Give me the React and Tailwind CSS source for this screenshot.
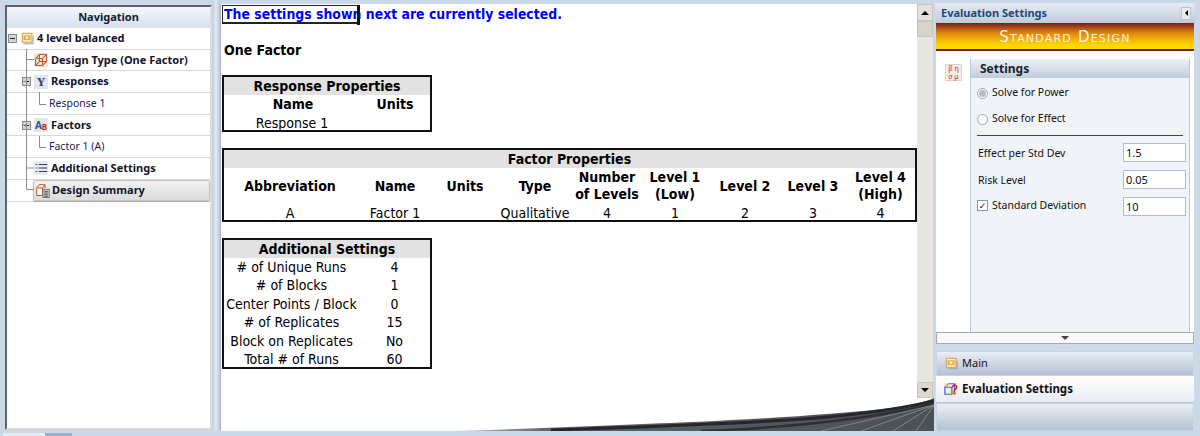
import React from "react";

const uiFont = { fontFamily: '"Noto Sans", "DejaVu Sans", sans-serif' };

const FolderIcon = ({ size = 13 }) => (
  <svg width={size} height={size} viewBox="0 0 16 16" className="shrink-0">
    <rect x="1.5" y="1.5" width="12" height="11" fill="#fff3d0" stroke="#c98a2a" />
    <rect x="3" y="4" width="9" height="6" fill="#f0b040" />
    <path d="M6 5 L10 7 L6 9 Z" fill="#fff" />
    <path d="M3 14.5 H15 V5" fill="none" stroke="#a0a0a0" strokeWidth="1.2" />
  </svg>
);

const DesignIcon = () => (
  <svg width="14" height="14" viewBox="0 0 18 18" className="shrink-0">
    <rect x="0" y="0" width="18" height="18" fill="#ece8e2" />
    <path d="M2 7 H11 V16 H2 Z M7 2 H16 V11 H7 Z M2 7 L7 2 M11 7 L16 2 M11 16 L16 11 M2 16 L7 11" fill="none" stroke="#c8512a" strokeWidth="1.3" />
    <rect x="1" y="6" width="2.5" height="2.5" fill="#e8a030" />
    <rect x="10" y="15" width="2.5" height="2.5" fill="#e8a030" />
  </svg>
);

const LetterBox = ({ children }) => (
  <div className="w-[14px] h-[14px] shrink-0 bg-[#e4e6ea] flex items-center justify-center overflow-hidden">
    {children}
  </div>
);

const ListIcon = () => (
  <svg width="14" height="14" viewBox="0 0 18 18" className="shrink-0">
    <rect x="0" y="0" width="18" height="18" fill="#e6e8ec" />
    <path d="M6 4.5 H17 M6 9 H17 M6 13.5 H17" stroke="#2f3f5f" strokeWidth="1.5" />
    <path d="M2 4.5 H4.5 M2 9 H4.5 M2 13.5 H4.5" stroke="#5a6a8a" strokeWidth="1.5" />
  </svg>
);

const SummaryIcon = () => (
  <svg width="15" height="15" viewBox="0 0 18 18" className="shrink-0">
    <path d="M2 6 H9 V15 H2 Z M5 2 H12 V6 M2 6 L5 2 M9 6 L12 2" fill="#fff" stroke="#c8512a" strokeWidth="1.2" />
    <rect x="9.5" y="7.5" width="7.5" height="10" fill="#cfd2d6" stroke="#666" />
    <path d="M11 10 H15.5 M11 12 H15.5 M11 14 H15.5 M11 16 H15.5" stroke="#444" />
    <rect x="1" y="5" width="2.5" height="2.5" fill="#e8a030" />
  </svg>
);

const EvalIcon = () => (
  <svg width="14" height="14" viewBox="0 0 16 16" className="shrink-0">
    <rect x="0" y="1" width="15" height="14" fill="#eee" />
    <path d="M1 6 H9 V14 H1 Z M5 2 H12 V10" fill="none" stroke="#4f5fd8" strokeWidth="1.4" />
    <path d="M1 6 L5 2 M9 14 L12 10" stroke="#e09020" strokeWidth="1.6" />
    <path d="M9.5 6 Q11 2 14 4.5 Q15.5 7 12 9 V11" fill="none" stroke="#d02020" strokeWidth="1.7" />
    <rect x="11" y="12" width="2.2" height="2.2" fill="#d02020" />
  </svg>
);

const Expander = () => (
  <div className="w-[9px] h-[9px] bg-[#d4d4d4] border border-[#8a8a8a] flex items-center justify-center shrink-0">
    <div className="w-[5px] h-px bg-[#222]" />
  </div>
);

const TreeRow = ({ left, children }) => (
  <div className="h-[21.7px] border-b border-[#d8dad8] flex items-center" style={{ paddingLeft: left }}>
    {children}
  </div>
);

const boldItem = "text-[11px] font-bold text-[#14142a] whitespace-nowrap";

const Navigation = () => (
  <div className="w-[207px] ml-[5px] mt-[5px] h-[425px] bg-white border-l-2 border-t-2 border-[#5f6368] border-r-2 border-r-[#dcdcdc] border-b-2 border-b-[#dcd8d0] relative shrink-0">
    <div className="h-[21px] bg-gradient-to-b from-[#f4f7fb] to-[#d6dfec] text-center text-[11px] font-bold text-[#10202f] leading-[20px]">
      Navigation
    </div>
    {/* tree lines */}
    <svg className="absolute left-0 top-0" width="60" height="200">
      <path
        d="M19.5 42 V182.5 H27 M19.5 52.5 H27 M19.5 74.5 H15 M19.5 118 H15 M19.5 161 H27 M32.5 85 V97.5 H39 M32.5 129 V140.5 H39"
        fill="none"
        stroke="#8c8c8c"
      />
    </svg>
    <TreeRow left={1}>
      <Expander />
      <div className="ml-[4px]"><FolderIcon /></div>
      <span className={`ml-[3px] ${boldItem}`}>4 level balanced</span>
    </TreeRow>
    <TreeRow left={27}>
      <DesignIcon />
      <span className={`ml-[3px] ${boldItem}`}>Design Type (One Factor)</span>
    </TreeRow>
    <TreeRow left={15}>
      <Expander />
      <div className="ml-[3px] relative">
        <LetterBox>
          <span className="font-bold text-[12px] leading-none text-[#26407a]" style={{ fontFamily: '"Liberation Serif", serif' }}>Y</span>
        </LetterBox>
      </div>
      <span className={`ml-[3px] ${boldItem}`}>Responses</span>
    </TreeRow>
    <TreeRow left={42}>
      <span className="text-[10.5px] text-[#1b1b4e]">Response 1</span>
    </TreeRow>
    <TreeRow left={15}>
      <Expander />
      <div className="ml-[3px]">
        <LetterBox>
          <span className="font-bold text-[10px] text-[#2a50a0] leading-none">A</span>
          <span className="font-bold text-[8px] text-[#c02020] leading-none mt-[3px]">B</span>
        </LetterBox>
      </div>
      <span className={`ml-[3px] ${boldItem}`}>Factors</span>
    </TreeRow>
    <TreeRow left={42}>
      <span className="text-[10.5px] text-[#1b1b4e]">Factor 1 (A)</span>
    </TreeRow>
    <TreeRow left={27}>
      <ListIcon />
      <span className={`ml-[3px] ${boldItem}`}>Additional Settings</span>
    </TreeRow>
    <TreeRow left={0}>
      <div className="ml-[26px] h-[21px] w-[178px] flex items-center pl-[1px] bg-gradient-to-b from-[#f2f2f2] to-[#dcdcdc] border border-[#c4c4c4] rounded-[2px] shadow-[0_1px_1px_#aaa]">
        <SummaryIcon />
        <span className={`ml-[2px] ${boldItem}`}>Design Summary</span>
      </div>
    </TreeRow>
  </div>
);

const tableTitle = "bg-[#e2e2e2] text-center font-bold leading-[18px]";

const ResponseTable = () => (
  <div className="w-[210px] h-[57px] border-2 border-[#111] mt-[15px] overflow-hidden">
    <div className={tableTitle}>Response Properties</div>
    <div className="grid grid-cols-[136px_70px] font-bold text-center leading-[19px]">
      <div className="pl-[2px]">Name</div>
      <div>Units</div>
      <div className="font-normal">Response 1</div>
      <div />
    </div>
  </div>
);

const factorCols = "grid grid-cols-[132px_78px_62px_78px_66px_70px_70px_66px_69px] text-center whitespace-nowrap";

const FactorTable = () => (
  <div className="w-[695px] h-[74px] border-2 border-[#111] mt-[16px] overflow-hidden">
    <div className={tableTitle}>Factor Properties</div>
    <div className={`${factorCols} font-bold h-[36px] items-center leading-[17px]`}>
      <div>Abbreviation</div>
      <div>Name</div>
      <div>Units</div>
      <div>Type</div>
      <div>Number<br />of Levels</div>
      <div>Level 1<br />(Low)</div>
      <div>Level 2</div>
      <div>Level 3</div>
      <div>Level 4<br />(High)</div>
    </div>
    <div className={`${factorCols} leading-[19px]`}>
      <div>A</div>
      <div>Factor 1</div>
      <div />
      <div>Qualitative</div>
      <div>4</div>
      <div>1</div>
      <div>2</div>
      <div>3</div>
      <div>4</div>
    </div>
  </div>
);

const settingsRows = [
  ["# of Unique Runs", "4"],
  ["# of Blocks", "1"],
  ["Center Points / Block", "0"],
  ["# of Replicates", "15"],
  ["Block on Replicates", "No"],
  ["Total # of Runs", "60"],
];

const SettingsTable = () => (
  <div className="w-[210px] h-[131px] border-2 border-[#111] mt-[16px] overflow-hidden">
    <div className={tableTitle}>Additional Settings</div>
    <div className="grid grid-cols-[135px_71px] text-center leading-[18.4px]">
      {settingsRows.map(([label, value]) => (
        <React.Fragment key={label}>
          <div className="whitespace-nowrap">{label}</div>
          <div>{value}</div>
        </React.Fragment>
      ))}
    </div>
  </div>
);

const Report = () => (
  <div className="flex-1 bg-white overflow-hidden">
    <div className="pl-px text-[14px] text-black" style={{ fontFamily: '"DejaVu Sans", sans-serif', fontStretch: "condensed" }}>
      <div className="text-[#0000ff] font-bold h-[26px] leading-[20px] pl-[2px] whitespace-nowrap relative">
        <span className="text-[13.9px]">The settings shown next are currently selected.</span>
        {/* focus box over the heading */}
        <div className="absolute left-0 top-[1px] w-[136px] h-[19px] border border-[#222] border-b-2" />
        <div className="absolute left-[135px] top-[1px] w-[3px] h-[20px] bg-[#111]" />
      </div>
      <div className="font-bold mt-[10px] leading-[20px] pl-[2px]">One Factor</div>
      <ResponseTable />
      <FactorTable />
      <SettingsTable />
    </div>
  </div>
);

const Swoosh = () => (
  <svg className="absolute left-0 bottom-0" width="713" height="36" viewBox="0 0 713 36">
    <defs>
      <linearGradient id="sw" x1="0" x2="1" y1="0" y2="0">
        <stop offset="0" stopColor="#b8bcc0" />
        <stop offset="0.2" stopColor="#5a6066" />
        <stop offset="1" stopColor="#4a5056" />
      </linearGradient>
    </defs>
    <path d="M237 36 C330 33 420 29 479 26.7 C540 24 620 19 679 12 C692 10 704 7 713 3 V36 Z" fill="url(#sw)" />
    <path d="M330 35 C420 32 500 29 560 25.5 C620 22 670 16 713 6" fill="none" stroke="#24282c" strokeWidth="3" />
    <path d="M480 36 C560 33 640 26 713 9" fill="none" stroke="#2c3034" strokeWidth="2.5" />
    <path d="M600 36 L713 10 M640 36 L713 10 M672 36 L713 10 M695 36 L713 10" fill="none" stroke="#8a9096" strokeWidth="0.8" />
  </svg>
);

const Scrollbar = () => (
  <div className="w-[16px] shrink-0 bg-[#e8e6e1] flex flex-col relative z-10 h-[394px]">
    <div className="h-[17px] bg-[#e4e1da] border border-[#c8c5be] flex items-center justify-center">
      <div className="w-0 h-0 border-x-[4px] border-x-transparent border-b-[4px] border-b-black" />
    </div>
    <div className="h-[16px] bg-[#d8d4cc] border border-[#c8c5be]" />
    <div className="flex-1" />
    <div className="h-[16px] bg-[#dcd8d0] border border-[#c8c5be] flex items-center justify-center">
      <div className="w-0 h-0 border-x-[4px] border-x-transparent border-t-[4px] border-t-black" />
    </div>
  </div>
);

const Field = ({ value }) => (
  <div className="w-[63px] h-[19px] bg-white border border-[#b4bcc8] pl-[2px] text-[11px] leading-[17px] text-[#111]">
    {value}
  </div>
);

const RadioDot = ({ on }) => (
  <div className="w-[11px] h-[11px] rounded-full border border-[#9aa4b4] bg-white flex items-center justify-center shrink-0">
    {on && <div className="w-[7px] h-[7px] rounded-full bg-[#b4bcc8]" />}
  </div>
);

const SidePanel = () => (
  <div className="w-[260px] ml-[2px] h-[428px] mt-[3px] bg-[#d0dbea] flex flex-col shrink-0 text-[#111]" style={uiFont}>
    <div className="h-[20px] shrink-0 bg-gradient-to-b from-[#e6ebf3] to-[#bfcbdc] flex items-center justify-between pl-[6px] pr-[3px]">
      <span className="text-[11px] font-bold text-[#24487c]">Evaluation Settings</span>
      <div className="w-[10px] h-[13px] mr-[1px] bg-[#e8ebf0] border border-[#b8c2d0] flex items-center justify-center">
        <div className="w-0 h-0 border-y-[3px] border-y-transparent border-r-[3px] border-r-black" />
      </div>
    </div>
    <div className="h-[28px] shrink-0 mx-[1px] bg-gradient-to-b from-[#7a1a14] via-[#e08a0c] via-40% to-[#ffd800] to-85% border-b-2 border-[#7a1a14] flex items-center justify-center pt-[3px]">
      <span className="text-[15px] text-[#f6f1e2] tracking-[1.2px] whitespace-nowrap" style={{ fontVariant: "small-caps", fontFamily: '"DejaVu Sans", sans-serif' }}>
        Standard Design
      </span>
    </div>
    <div className="h-[281px] shrink-0 mx-[1px] bg-white flex">
      <div className="w-[34px] shrink-0 pt-[13px] pl-[9px]">
        <div className="w-[17px] h-[17px] bg-[#f6ecec] border border-[#e0d0d0] text-[7px] leading-[7.5px] text-[#e01818] text-center whitespace-nowrap">
          β η<br />σ μ
        </div>
      </div>
      <div className="w-[220px] mt-[8px] bg-[#f0f3f8] border-x border-[#bcc8d8]">
        <div className="h-[19px] bg-gradient-to-b from-[#eef2f7] to-[#c0ccdc] rounded-t-[3px] pl-[9px] text-[12px] font-bold text-[#1a2430] leading-[19px]">
          Settings
        </div>
        <div className="pl-[6px] pr-[3px] text-[10.5px]">
          <div className="flex items-center gap-[4px] h-[14px] mt-[8px]"><RadioDot on /> <span>Solve for Power</span></div>
          <div className="flex items-center gap-[4px] h-[14px] mt-[12px]"><RadioDot /> <span>Solve for Effect</span></div>
          <div className="h-px bg-[#444] mt-[9px] mr-[3px]" />
          <div className="flex items-center justify-between mt-[7px]"><span className="pl-[1px] pt-[2px]">Effect per Std Dev</span><Field value="1.5" /></div>
          <div className="flex items-center justify-between mt-[8px]"><span className="pl-[1px] pt-[2px]">Risk Level</span><Field value="0.05" /></div>
          <div className="flex items-start justify-between mt-[8px]">
            <div className="flex items-center gap-[4px] pt-[1px]">
              <div className="w-[11px] h-[11px] bg-white border border-[#8a94a4] flex items-center justify-center text-[9px] leading-none">✓</div>
              <span>Standard Deviation</span>
            </div>
            <Field value="10" />
          </div>
        </div>
      </div>
    </div>
    <div className="h-[12px] shrink-0 mx-[1px] bg-[#f6f8fb] border border-[#a8a8a8] flex items-center justify-center">
      <div className="w-0 h-0 border-x-[4px] border-x-transparent border-t-[4px] border-t-[#444]" />
    </div>
    <div className="h-[7px] shrink-0 flex items-center justify-center text-[5px] tracking-[1px] text-[#9fb0c6] leading-none">·····</div>
    <div className="h-[25px] shrink-0 mx-[1px] bg-gradient-to-b from-[#eaeef4] to-[#b4c1d3] border border-[#c8d4e4] flex items-center pl-[8px] text-[11px]">
      <FolderIcon />
      <span className="ml-[4px]">Main</span>
    </div>
    <div className="h-[27px] shrink-0 mx-[1px] bg-gradient-to-b from-white to-[#e8ecf3] border-b border-[#b8c6da] flex items-center pl-[8px] text-[11.5px] font-bold">
      <EvalIcon />
      <span className="ml-[4px]">Evaluation Settings</span>
    </div>
    <div className="flex-1 mx-[1px] bg-gradient-to-b from-[#eaeef4] to-[#b4c1d3] border border-[#c8d4e4]" />
  </div>
);

export default function App() {
  return (
    <div className="w-[1200px] h-[436px] bg-[#cbd8e8] relative overflow-hidden" style={uiFont}>
      <div className="flex h-[431px]">
        <Navigation />
        <div className="w-[8px] shrink-0 bg-gradient-to-r from-[#c0cee0] via-[#e2e8f1] to-[#b8c7db]" />
        <div className="w-[713px] h-[427px] mt-[4px] flex shrink-0 border-l border-[#a8b4c4] bg-white relative">
          <Report />
          <Scrollbar />
          <Swoosh />
        </div>
        <SidePanel />
      </div>
      <div className="absolute left-[3px] bottom-0 h-[3px] w-[42px] bg-[#e6edf5]" />
      <div className="absolute left-[45px] bottom-0 h-[3px] w-[27px] bg-[#9fb0c9]" />
    </div>
  );
}
